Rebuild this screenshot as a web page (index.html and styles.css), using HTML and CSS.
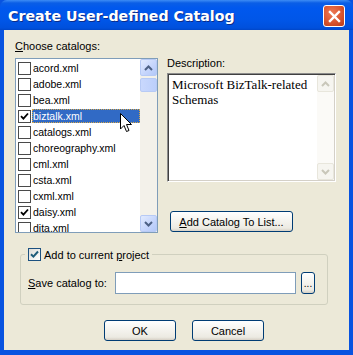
FILE: index.html
```html
<!DOCTYPE html>
<html>
<head>
<meta charset="utf-8">
<link rel="stylesheet" href="styles.css">
</head>
<body>
<div class="window">
  <div class="titlebar">
    <span class="title">Create User-defined Catalog</span>
    <div class="close">
      <svg width="13" height="13" viewBox="0 0 13 13"><path d="M2 2 L11 11 M11 2 L2 11" stroke="#fff" stroke-width="2.4" stroke-linecap="square"/></svg>
    </div>
  </div>
  <div class="client">
    <div class="top">
      <div class="leftcol">
        <div class="label"><u>C</u>hoose catalogs:</div>
        <div class="listbox">
          <div class="items">
            <div class="row"><span class="lcb"></span><span class="txt">acord.xml</span></div>
            <div class="row"><span class="lcb"></span><span class="txt">adobe.xml</span></div>
            <div class="row"><span class="lcb"></span><span class="txt">bea.xml</span></div>
            <div class="row"><span class="lcb checked"><svg width="9" height="9" viewBox="0 0 9 9"><path d="M1 4.2 L3.4 6.6 L8 1.5" fill="none" stroke="#000" stroke-width="1.8"/></svg></span><span class="txt sel">biztalk.xml</span></div>
            <div class="row"><span class="lcb"></span><span class="txt">catalogs.xml</span></div>
            <div class="row"><span class="lcb"></span><span class="txt">choreography.xml</span></div>
            <div class="row"><span class="lcb"></span><span class="txt">cml.xml</span></div>
            <div class="row"><span class="lcb"></span><span class="txt">csta.xml</span></div>
            <div class="row"><span class="lcb"></span><span class="txt">cxml.xml</span></div>
            <div class="row"><span class="lcb checked"><svg width="9" height="9" viewBox="0 0 9 9"><path d="M1 4.2 L3.4 6.6 L8 1.5" fill="none" stroke="#000" stroke-width="1.8"/></svg></span><span class="txt">daisy.xml</span></div>
            <div class="row"><span class="lcb"></span><span class="txt">dita.xml</span></div>
          </div>
          <div class="vscroll">
            <div class="sbtn"><svg width="9" height="6" viewBox="0 0 9 6"><path d="M1 5 L4.5 1.5 L8 5" fill="none" stroke="#4D6185" stroke-width="2"/></svg></div>
            <div class="track"><div class="thumb"></div></div>
            <div class="sbtn"><svg width="9" height="6" viewBox="0 0 9 6"><path d="M1 1 L4.5 4.5 L8 1" fill="none" stroke="#4D6185" stroke-width="2"/></svg></div>
          </div>
        </div>
      </div>
      <div class="rightcol">
        <div class="label">Description:</div>
        <div class="descbox">
          <div class="desctext">Microsoft BizTalk-related Schemas</div>
          <div class="vscroll dis">
            <div class="sbtn"><svg width="9" height="6" viewBox="0 0 9 6"><path d="M1 5 L4.5 1.5 L8 5" fill="none" stroke="#C9C7BA" stroke-width="2"/></svg></div>
            <div class="track"></div>
            <div class="sbtn"><svg width="9" height="6" viewBox="0 0 9 6"><path d="M1 1 L4.5 4.5 L8 1" fill="none" stroke="#C9C7BA" stroke-width="2"/></svg></div>
          </div>
        </div>
        <div class="btn addbtn"><u>A</u>dd Catalog To List...</div>
      </div>
    </div>
    <fieldset class="group">
      <legend class="legend"><span class="cb"><svg width="9" height="9" viewBox="0 0 9 9"><path d="M1 4.2 L3.4 6.6 L8 1.5" fill="none" stroke="#1E5C7A" stroke-width="2"/></svg></span><span>Add to current <u>p</u>roject</span></legend>
      <div class="saverow">
        <span class="savelabel"><u>S</u>ave catalog to:</span>
        <div class="input"></div>
        <div class="btn dots">...</div>
      </div>
    </fieldset>
    <div class="buttons">
      <div class="btn okbtn">OK</div>
      <div class="btn">Cancel</div>
    </div>
  </div>
  <svg class="cursor" width="13" height="20" viewBox="0 0 13 20"><path d="M0.5 0.5 L0.5 16 L4 12.5 L6.5 18.5 L9 17.5 L6.5 11.5 L11.5 11.5 Z" fill="#fff" stroke="#000" stroke-width="1"/></svg>
</div>
</body>
</html>
```
FILE: styles.css
```css
html, body {
  margin: 0;
  padding: 0;
}
body {
  font-family: "Liberation Sans", Arial, sans-serif;
  font-size: 11px;
  color: #000;
}
.window {
  position: relative;
  width: 353px;
  height: 355px;
  background: #0853E0;
  display: flex;
  flex-direction: column;
  box-sizing: border-box;
}
.titlebar {
  height: 30px;
  flex: none;
  display: flex;
  align-items: center;
  background: linear-gradient(to bottom, #3D8CF5 0px, #0A5EE6 3px, #0058EE 8px, #0056E8 20px, #0050DC 28px, #0046C8 30px);
  border-radius: 7px 7px 0 0;
}
.title {
  margin-left: 8px;
  margin-top: 2px;
  font-family: "DejaVu Sans", sans-serif;
  font-weight: bold;
  font-size: 14.2px;
  color: #fff;
  text-shadow: 1px 1px 0 #0B2C8A;
}
.close {
  margin-left: auto;
  margin-right: 8px;
  margin-top: 2px;
  width: 20px;
  height: 20px;
  border: 1px solid #fff;
  border-radius: 3px;
  background: radial-gradient(circle at 40% 35%, #EE7A55 0%, #D9552F 55%, #B83A18 100%);
  display: flex;
  align-items: center;
  justify-content: center;
}
.client {
  flex: 1;
  margin: 0 4px 5px 4px;
  background: #ECE9D8;
  padding: 10px 0 0 11px;
}
.top {
  display: flex;
  height: 193px;
}
.leftcol {
  width: 143px;
  display: flex;
  flex-direction: column;
}
.label {
  line-height: 13px;
  height: 13px;
  margin-bottom: 5px;
}
.listbox {
  height: 175px;
  box-sizing: border-box;
  border: 1px solid #7F9DB9;
  background: #fff;
  display: flex;
  overflow: hidden;
}
.items {
  flex: 1;
  padding-top: 1px;
  overflow: hidden;
  font-size: 10.5px;
}
.row {
  height: 16px;
  display: flex;
  align-items: center;
}
.lcb {
  width: 11px;
  height: 11px;
  margin-left: 2px;
  border: 1px solid #4A4A4A;
  background: #fff;
  display: flex;
  align-items: center;
  justify-content: center;
  flex: none;
}
.txt {
  margin-left: 1px;
  padding: 0 2px 0 1px;
  height: 14px;
  line-height: 14px;
  white-space: nowrap;
}
.txt.sel {
  background: #316AC5;
  color: #fff;
  flex: 1;
  outline: 1px dotted #D8A848;
  outline-offset: -1px;
}
.vscroll {
  width: 17px;
  flex: none;
  display: flex;
  flex-direction: column;
  background: #F3F1EA;
}
.sbtn {
  height: 17px;
  box-sizing: border-box;
  border: 1px solid #B7CAF5;
  border-radius: 2px;
  background: linear-gradient(to bottom right, #E2EBFE, #C4D4FC 60%, #B3C8F8);
  display: flex;
  align-items: center;
  justify-content: center;
  flex: none;
}
.track {
  flex: 1;
  padding-top: 2px;
}
.thumb {
  height: 14px;
  box-sizing: border-box;
  border: 1px solid #B7CAF5;
  border-radius: 2px;
  background: linear-gradient(to right, #C9D8FD, #BCCFFB);
}
.rightcol {
  margin-left: 9px;
  width: 169px;
  padding-top: 17px;
  display: flex;
  flex-direction: column;
}
.rightcol .label {
  margin-bottom: 3px;
}
.descbox {
  height: 109px;
  box-sizing: border-box;
  border: 1px solid;
  border-color: #8C8C8C #FFFFFF #FFFFFF #8C8C8C;
  box-shadow: inset 1px 1px 0 #404040, inset -1px -1px 0 #D4D0C8;
  background: #fff;
  display: flex;
  padding: 1px;
}
.desctext {
  flex: 1;
  font-family: "Liberation Serif", "Times New Roman", serif;
  font-size: 13px;
  line-height: 15px;
  padding: 2px 0 0 3px;
}
.vscroll.dis {
  background: #FBFAF7;
  width: 17px;
}
.vscroll.dis .sbtn {
  border-color: #E8E6DC;
  background: #F6F5F0;
}
.btn {
  height: 21px;
  box-sizing: border-box;
  border: 1px solid #003C74;
  border-radius: 3px;
  background: linear-gradient(to bottom, #FFFFFF 0%, #F6F5F1 40%, #ECEAE2 85%, #D6D0C5 100%);
  display: flex;
  align-items: center;
  justify-content: center;
}
.addbtn {
  margin-top: 29px;
  margin-left: 3px;
  width: 123px;
}
.group {
  margin: 15px 0 0 5px;
  width: 308px;
  box-sizing: border-box;
  border: 1px solid #D0D0BF;
  border-radius: 3px;
  padding: 11px 0 10px 7px;
}
.legend {
  padding: 0 3px;
  margin-left: -3px;
  display: flex;
  align-items: center;
  height: 13px;
}
.cb {
  width: 11px;
  height: 11px;
  border: 1px solid #1C5180;
  background: linear-gradient(to bottom right, #DCDCD7, #FFFFFF);
  display: flex;
  align-items: center;
  justify-content: center;
  margin-right: 3px;
}
.saverow {
  display: flex;
  align-items: center;
}
.savelabel {
  width: 87px;
}
.input {
  width: 181px;
  height: 22px;
  box-sizing: border-box;
  border: 1px solid #7F9DB9;
  background: #fff;
}
.dots {
  margin-left: 5px;
  width: 14px;
  height: 22px;
  align-items: flex-end;
  padding-bottom: 4px;
  font-size: 10px;
}
.buttons {
  display: flex;
  gap: 16px;
  margin-top: 15px;
  padding-left: 89px;
}
.buttons .btn {
  width: 72px;
}
.cursor {
  position: absolute;
  left: 120px;
  top: 113px;
}
```
